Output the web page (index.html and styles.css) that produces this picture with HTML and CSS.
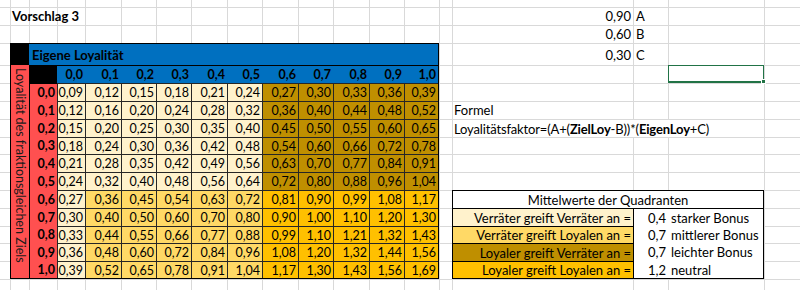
FILE: index.html
```html
<!DOCTYPE html>
<html lang="de">
<head>
<meta charset="utf-8">
<title>Vorschlag 3</title>
<link rel="stylesheet" href="styles.css">
</head>
<body>
<div class="sheet">
  <div class="title">Vorschlag 3</div>

  <div class="pval pr1">0,90</div><div class="pkey pr1">A</div>
  <div class="pval pr2">0,60</div><div class="pkey pr2">B</div>
  <div class="pval pr3">0,30</div><div class="pkey pr3">C</div>

  <div class="selected"><span class="handle"></span></div>

  <div class="formel-label">Formel</div>
  <div class="formel">Loyalitätsfaktor=(A+(<b>ZielLoy</b>-B))*(<b>EigenLoy</b>+C)</div>

  <div class="loyal">
    <div class="corner"></div>
    <div class="eigen">Eigene Loyalität</div>
    <div class="ziel"><span>Loyalität des fraktionsgleichen Ziels</span></div>
    <div class="corner2"></div>
    <div class="h">0,0</div><div class="h">0,1</div><div class="h">0,2</div><div class="h">0,3</div><div class="h">0,4</div><div class="h">0,5</div><div class="h">0,6</div><div class="h">0,7</div><div class="h">0,8</div><div class="h">0,9</div><div class="h">1,0</div>

    <div class="rl first">0,0</div>
    <div class="c cream">0,09</div><div class="c cream">0,12</div><div class="c cream">0,15</div><div class="c cream">0,18</div><div class="c cream">0,21</div><div class="c cream">0,24</div><div class="c gold">0,27</div><div class="c gold">0,30</div><div class="c gold">0,33</div><div class="c gold">0,36</div><div class="c gold">0,39</div>
    <div class="rl">0,1</div>
    <div class="c cream">0,12</div><div class="c cream">0,16</div><div class="c cream">0,20</div><div class="c cream">0,24</div><div class="c cream">0,28</div><div class="c cream">0,32</div><div class="c gold">0,36</div><div class="c gold">0,40</div><div class="c gold">0,44</div><div class="c gold">0,48</div><div class="c gold">0,52</div>
    <div class="rl">0,2</div>
    <div class="c cream">0,15</div><div class="c cream">0,20</div><div class="c cream">0,25</div><div class="c cream">0,30</div><div class="c cream">0,35</div><div class="c cream">0,40</div><div class="c gold">0,45</div><div class="c gold">0,50</div><div class="c gold">0,55</div><div class="c gold">0,60</div><div class="c gold">0,65</div>
    <div class="rl">0,3</div>
    <div class="c cream">0,18</div><div class="c cream">0,24</div><div class="c cream">0,30</div><div class="c cream">0,36</div><div class="c cream">0,42</div><div class="c cream">0,48</div><div class="c gold">0,54</div><div class="c gold">0,60</div><div class="c gold">0,66</div><div class="c gold">0,72</div><div class="c gold">0,78</div>
    <div class="rl">0,4</div>
    <div class="c cream">0,21</div><div class="c cream">0,28</div><div class="c cream">0,35</div><div class="c cream">0,42</div><div class="c cream">0,49</div><div class="c cream">0,56</div><div class="c gold">0,63</div><div class="c gold">0,70</div><div class="c gold">0,77</div><div class="c gold">0,84</div><div class="c gold">0,91</div>
    <div class="rl">0,5</div>
    <div class="c cream">0,24</div><div class="c cream">0,32</div><div class="c cream">0,40</div><div class="c cream">0,48</div><div class="c cream">0,56</div><div class="c cream">0,64</div><div class="c gold">0,72</div><div class="c gold">0,80</div><div class="c gold">0,88</div><div class="c gold">0,96</div><div class="c gold">1,04</div>
    <div class="rl">0,6</div>
    <div class="c cream">0,27</div><div class="c yellow">0,36</div><div class="c yellow">0,45</div><div class="c yellow">0,54</div><div class="c yellow">0,63</div><div class="c yellow">0,72</div><div class="c orange">0,81</div><div class="c orange">0,90</div><div class="c orange">0,99</div><div class="c orange">1,08</div><div class="c orange">1,17</div>
    <div class="rl">0,7</div>
    <div class="c cream">0,30</div><div class="c yellow">0,40</div><div class="c yellow">0,50</div><div class="c yellow">0,60</div><div class="c yellow">0,70</div><div class="c yellow">0,80</div><div class="c orange">0,90</div><div class="c orange">1,00</div><div class="c orange">1,10</div><div class="c orange">1,20</div><div class="c orange">1,30</div>
    <div class="rl">0,8</div>
    <div class="c cream">0,33</div><div class="c yellow">0,44</div><div class="c yellow">0,55</div><div class="c yellow">0,66</div><div class="c yellow">0,77</div><div class="c yellow">0,88</div><div class="c orange">0,99</div><div class="c orange">1,10</div><div class="c orange">1,21</div><div class="c orange">1,32</div><div class="c orange">1,43</div>
    <div class="rl">0,9</div>
    <div class="c cream">0,36</div><div class="c yellow">0,48</div><div class="c yellow">0,60</div><div class="c yellow">0,72</div><div class="c yellow">0,84</div><div class="c yellow">0,96</div><div class="c orange">1,08</div><div class="c orange">1,20</div><div class="c orange">1,32</div><div class="c orange">1,44</div><div class="c orange">1,56</div>
    <div class="rl">1,0</div>
    <div class="c cream">0,39</div><div class="c yellow">0,52</div><div class="c yellow">0,65</div><div class="c yellow">0,78</div><div class="c yellow">0,91</div><div class="c yellow">1,04</div><div class="c orange">1,17</div><div class="c orange">1,30</div><div class="c orange">1,43</div><div class="c orange">1,56</div><div class="c orange">1,69</div>
  </div>

  <div class="legend">
    <div class="lg-head">Mittelwerte der Quadranten</div>
    <div class="lg-label cream">Verräter greift Verräter an =</div><div class="lg-val">0,4</div><div class="lg-txt">starker Bonus</div>
    <div class="lg-label yellow">Verräter greift Loyalen an =</div><div class="lg-val">0,7</div><div class="lg-txt">mittlerer Bonus</div>
    <div class="lg-label gold">Loyaler greift Verräter an =</div><div class="lg-val">0,7</div><div class="lg-txt">leichter Bonus</div>
    <div class="lg-label orange">Loyaler greift Loyalen an =</div><div class="lg-val">1,2</div><div class="lg-txt">neutral</div>
  </div>
</div>
</body>
</html>
```
FILE: styles.css
```css
* { box-sizing: border-box; }

html, body {
  margin: 0;
  padding: 0;
  background: #fff;
}

body {
  font-family: Lato, "Open Sans", sans-serif;
  font-size: 13px;
  color: #000;
}

.sheet {
  width: 800px;
  height: 290px;
  overflow: hidden;
  display: grid;
  grid-template-columns: 10px 19px 28px 28px 36px 35px 35px 36px 35px 36px 35px 36px 35px 35px 13px 181px 35px 96px 36px;
  grid-template-rows: 7px 18px 18px 22px 18px 18px 18px 18px 17px 18px 18px 18px 18px 17px 18px 18px 11px;
  background-color: #fff;
  background-repeat: no-repeat;
  background-image:
    linear-gradient(#d9d9d9, #d9d9d9), linear-gradient(#d9d9d9, #d9d9d9), linear-gradient(#d9d9d9, #d9d9d9),
    linear-gradient(#d9d9d9, #d9d9d9), linear-gradient(#d9d9d9, #d9d9d9), linear-gradient(#d9d9d9, #d9d9d9),
    linear-gradient(#d9d9d9, #d9d9d9), linear-gradient(#d9d9d9, #d9d9d9), linear-gradient(#d9d9d9, #d9d9d9),
    linear-gradient(#d9d9d9, #d9d9d9), linear-gradient(#d9d9d9, #d9d9d9), linear-gradient(#d9d9d9, #d9d9d9),
    linear-gradient(#d9d9d9, #d9d9d9), linear-gradient(#d9d9d9, #d9d9d9), linear-gradient(#d9d9d9, #d9d9d9),
    linear-gradient(#d9d9d9, #d9d9d9), linear-gradient(#d9d9d9, #d9d9d9), linear-gradient(#d9d9d9, #d9d9d9),
    linear-gradient(#d9d9d9, #d9d9d9), linear-gradient(#d9d9d9, #d9d9d9), linear-gradient(#d9d9d9, #d9d9d9),
    linear-gradient(#d9d9d9, #d9d9d9), linear-gradient(#d9d9d9, #d9d9d9), linear-gradient(#d9d9d9, #d9d9d9),
    linear-gradient(#d9d9d9, #d9d9d9), linear-gradient(#d9d9d9, #d9d9d9), linear-gradient(#d9d9d9, #d9d9d9),
    linear-gradient(#d9d9d9, #d9d9d9), linear-gradient(#d9d9d9, #d9d9d9), linear-gradient(#d9d9d9, #d9d9d9),
    linear-gradient(#d9d9d9, #d9d9d9), linear-gradient(#d9d9d9, #d9d9d9), linear-gradient(#d9d9d9, #d9d9d9),
    linear-gradient(#d9d9d9, #d9d9d9), linear-gradient(#d9d9d9, #d9d9d9);
  background-size:
    1px 100%, 1px 100%, 1px 100%, 1px 100%, 1px 100%, 1px 100%,
    1px 100%, 1px 100%, 1px 100%, 1px 100%, 1px 100%, 1px 100%,
    1px 100%, 1px 100%, 1px 100%, 1px 100%, 1px 100%, 1px 100%,
    100% 1px, 100% 1px, 100% 1px, 100% 1px, 100% 1px, 100% 1px,
    100% 1px, 100% 1px, 100% 1px, 100% 1px, 100% 1px, 100% 1px,
    100% 1px, 100% 1px, 100% 1px, 100% 1px, 100% 1px;
  background-position:
    10px 0, 29px 0, 57px 0, 85px 0, 121px 0, 156px 0,
    191px 0, 227px 0, 262px 0, 298px 0, 333px 0, 369px 0,
    404px 0, 439px 0, 452px 0, 633px 0, 668px 0, 764px 0,
    0 7px, 0 25px, 0 43px, 0 65px, 0 83px, 0 101px,
    0 119px, 0 137px, 0 154px, 0 172px, 0 190px, 0 208px,
    0 226px, 0 243px, 0 261px, 0 279px, 0 290px;
}

/* ---------- loose cells ---------- */
.title {
  grid-column: 2 / span 5;
  grid-row: 2;
  font-weight: 700;
  padding-left: 2px;
  display: flex;
  align-items: center;
  white-space: nowrap;
}

.pval, .pkey {
  display: flex;
  align-items: center;
  white-space: nowrap;
}
.pval { grid-column: 16; justify-content: flex-end; padding-right: 2px; }
.pkey { grid-column: 17; padding-left: 3px; }
.pr1 { grid-row: 2; }
.pr2 { grid-row: 3; }
.pr3 { grid-row: 4; align-items: flex-end; padding-bottom: 2px; }

.selected {
  grid-column: 18;
  grid-row: 5;
  border: 1px solid #217346;
  border-bottom-width: 2px;
  position: relative;
}
.handle {
  position: absolute;
  right: -3px;
  bottom: -3px;
  width: 5px;
  height: 5px;
  background: #217346;
  border: 1px solid #fff;
}

.formel-label {
  grid-column: 16;
  grid-row: 7;
  padding-left: 2px;
  display: flex;
  align-items: center;
}
.formel {
  grid-column: 16 / 19;
  grid-row: 8;
  margin: 1px 0 0 1px;
  padding-left: 1px;
  background: #fff;
  display: flex;
  align-items: center;
  white-space: nowrap;
  letter-spacing: -0.15px;
}
.formel b { font-weight: 700; }

/* ---------- main matrix ---------- */
.loyal {
  grid-column: 2 / 15;
  grid-row: 4 / 17;
  display: grid;
  grid-template-columns: 19px 28px 28px 36px 35px 35px 36px 35px 36px 35px 36px 35px 34px;
  grid-template-rows: 22px 18px 18px 18px 18px 17px 18px 18px 18px 18px 17px 18px 17px;
  border-right: 1px solid #000;
  border-bottom: 1px solid #000;
  background: #000;
  font-size: 12.5px;
}

.corner { background: #000; }

.eigen {
  grid-column: 2 / 14;
  background: #0070c0;
  border-top: 1px solid #000;
  font-weight: 700;
  font-size: 13px;
  padding-left: 3px;
  display: flex;
  align-items: center;
}

.ziel {
  grid-column: 1;
  grid-row: 2 / 14;
  background: #ff5050;
  border-left: 1px solid #000;
  display: flex;
  justify-content: center;
  padding-top: 3px;
}
.ziel span {
  writing-mode: vertical-rl;
  white-space: nowrap;
  color: #1a1a1a;
  font-size: 12.5px;
}

.corner2 { background: #000; }

.h {
  background: #0070c0;
  border-top: 1px solid #000;
  font-weight: 700;
  display: flex;
  align-items: center;
  justify-content: flex-end;
  padding-right: 2px;
}

.rl {
  grid-column: 2;
  background: #ff5050;
  border-left: 1px solid #000;
  font-weight: 700;
  display: flex;
  align-items: center;
  justify-content: flex-end;
  padding-right: 2px;
}
.rl.first { border-top: 1px solid #000; }

.c {
  border-left: 1px solid #262626;
  border-top: 1px solid #262626;
  display: flex;
  align-items: center;
  justify-content: flex-end;
  padding-right: 2px;
}

.cream  { background: #fff2cc; }
.yellow { background: #ffd966; }
.gold   { background: #bf8f00; }
.orange { background: #ffc000; }

/* ---------- legend ---------- */
.legend {
  grid-column: 16 / 19;
  grid-row: 12 / 17;
  border: 1px solid #000;
  background: #fff;
  display: grid;
  grid-template-columns: 180px 35px 95px;
  grid-template-rows: 17px 18px 17px 18px 17px;
}

.lg-head {
  grid-column: 1 / 4;
  display: flex;
  align-items: center;
  justify-content: center;
}

.lg-label {
  border-top: 1px solid #000;
  display: flex;
  align-items: center;
  justify-content: flex-end;
  padding-right: 2px;
  white-space: nowrap;
}

.lg-val {
  border-left: 1px solid #000;
  display: flex;
  align-items: center;
  justify-content: flex-end;
  padding-right: 2px;
}
.legend .lg-val:nth-child(3) { border-top: 1px solid #000; }

.lg-txt {
  display: flex;
  align-items: center;
  padding-left: 3px;
  white-space: nowrap;
}
.legend .lg-txt:nth-child(4) { border-top: 1px solid #000; }
```
